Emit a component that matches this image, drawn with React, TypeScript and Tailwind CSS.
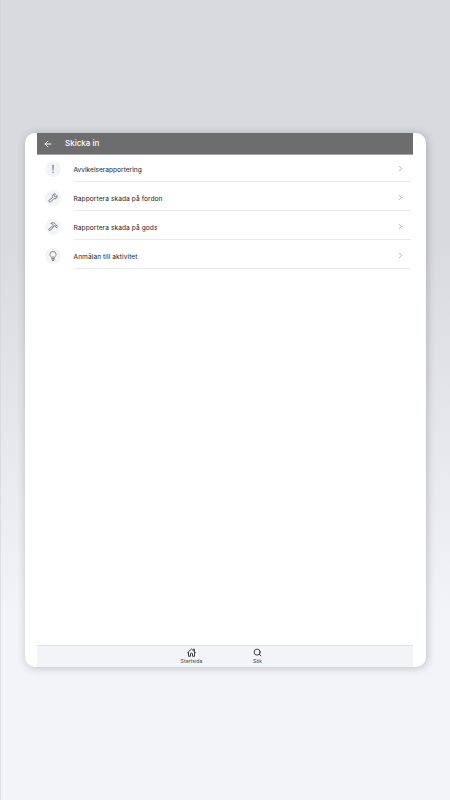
import { ArrowLeft, ChevronRight, Search } from "lucide-react";

const WrenchIcon = () => (
  <svg width="10" height="10" viewBox="0 0 20 20" fill="none" stroke="#66676c" strokeWidth="1.7" strokeLinejoin="round">
    <path d="M2 14.500 9 9C8.300 6 9.300 3.200 12 2c1-.4 2-.4 3 0l-2.600 2.700.5 2.300 2.500.6L18.200 5c.8 3.400-1 6.200-4.200 6.600-.8.1-1.600 0-2.400-.3L5.500 17.800c-2 1.500-5.500-1.300-3.500-3.300Z" />
  </svg>
);

const HammerIcon = () => (
  <svg width="10" height="10" viewBox="0 0 20 20" fill="none" stroke="#66676c" strokeWidth="1.6" strokeLinejoin="round">
    <path d="M5.500 3C9 1 12 1 14 3l1.500 1.500v2l1 1 1.500-.5L19.500 9 17 11.500 15 10l.3-1.500L14 7.300l-1.500.2L5 16.500c-2 1.500-4.500-.5-3-2.500l8.500-7C10.500 4.500 8.500 3.500 5.500 3Z" />
  </svg>
);

const BulbIcon = () => (
  <svg width="8" height="10" viewBox="0 0 16 20" fill="none" stroke="#66676c" strokeWidth="1.5" strokeLinecap="round">
    <path d="M5.500 14c0-2.500-3.700-3.500-3.700-7.300a6.200 5.700 0 0 1 12.400 0c0 3.800-3.700 4.800-3.700 7.300Z" />
    <path d="M8 14v-3M5.500 16.500h5M6.500 19h3" />
  </svg>
);

const ExclamationIcon = () => (
  <svg width="4" height="10" viewBox="0 0 4 10" fill="#808186">
    <path d="M1.200 1h1.600l-.3 5.500h-1Z" />
    <circle cx="2" cy="8.300" r=".75" />
  </svg>
);

const HomeIcon = () => (
  <svg width="9" height="9" viewBox="0 0 18 18" fill="none" stroke="#202124" strokeWidth="1.7" strokeLinecap="round" strokeLinejoin="round">
    <path d="M1 9.500 9 2l8 7.500M3 9v7.500h4V11.500c0-1 .8-1.500 2-1.500s2 .5 2 1.500v5h4V9M12.500 2.500H15v4" />
  </svg>
);

const menuItems = [
  { id: 1, label: "Avvikelserapportering", icon: <ExclamationIcon />, spacing: "tracking-[0px]" },
  { id: 2, label: "Rapportera skada på fordon", icon: <WrenchIcon />, spacing: "tracking-[0.08px]" },
  { id: 3, label: "Rapportera skada på gods", icon: <HammerIcon />, spacing: "tracking-[0.08px]" },
  { id: 4, label: "Anmälan till aktivitet", icon: <BulbIcon />, spacing: "tracking-[0.08px]" },
];

const App = () => {
  return (
    <div className="h-[800px] w-[450px] border-l border-[#d0d2d8]/60 bg-[linear-gradient(180deg,#d8dadf_0px,#d8dadf_240px,#f3f4f9_620px)] pt-[133px] pl-6 font-['Inter',sans-serif]">
      <div className="flex h-[534px] w-[400.5px] overflow-hidden rounded-[10px] bg-white px-3 shadow-[1px_1px_8px_rgba(50,50,65,0.28)]">
        <div className="flex w-[376px] shrink-0 flex-col">
          <header className="flex h-[22px] shrink-0 items-center border-b border-[#a4a4a6] bg-[#6d6d6f] pl-[6px] text-white">
            <ArrowLeft size={10} strokeWidth={2.2} />
            <h1 className="ml-3 pb-px text-[8px] leading-none font-medium whitespace-nowrap">Skicka in</h1>
          </header>

          <main className="-mt-[2px] flex-1">
            {menuItems.map((item) => (
              <button key={item.id} className="flex h-[29px] w-full items-center pl-2 text-left">
                <span className="mt-[3px] flex size-4 shrink-0 items-center justify-center rounded-full bg-[#f3f4f9]">{item.icon}</span>
                <span className="mr-[2px] ml-[12.5px] flex h-full flex-1 items-center justify-between border-b border-[#e8e8ea] pt-[3px] pr-[6px]">
                  <span className={`pt-[2px] text-[6.6px] leading-[8px] whitespace-nowrap text-[#18191b] ${item.spacing}`}>{item.label}</span>
                  <ChevronRight size={9} strokeWidth={2} className="text-[#999a9e]" />
                </span>
              </button>
            ))}
          </main>

          <nav className="flex h-[22px] shrink-0 justify-center border-t border-[#dedfe2] bg-[#f2f4f8] pt-[2px] pr-px text-[#202124]">
            <div className="flex w-[66px] flex-col items-center">
              <HomeIcon />
              <span className="mt-[1px] text-[5px] leading-[6px] tracking-[0.1px] text-[#3b3c40]">Startsida</span>
            </div>
            <div className="flex w-[66px] flex-col items-center">
              <Search size={9} strokeWidth={2.2} />
              <span className="mt-[1px] text-[5px] leading-[6px] text-[#3b3c40]">Sök</span>
            </div>
          </nav>
        </div>
      </div>
    </div>
  );
};

export default App;
